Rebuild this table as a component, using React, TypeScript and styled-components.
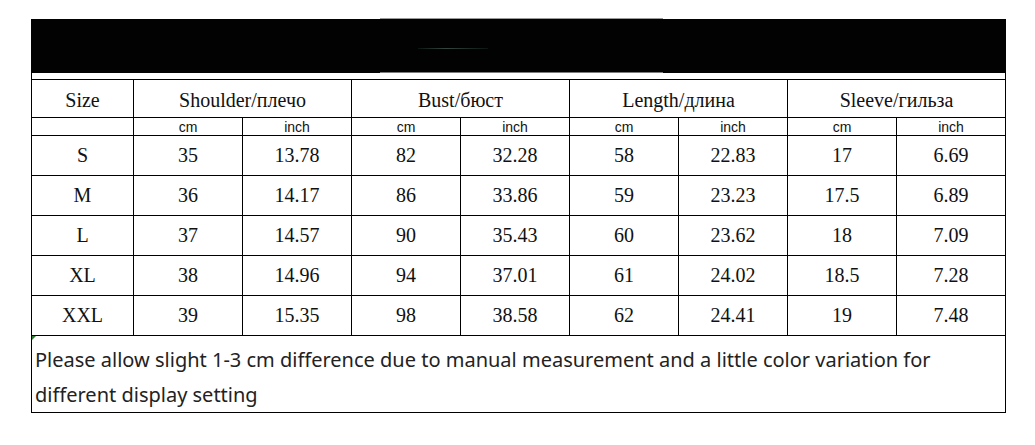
import styled, { createGlobalStyle } from 'styled-components';
import { Fragment } from 'react';

interface ISizeRow {
	size: string;
	values: string[];
}

const groups = ['Shoulder/плечо', 'Bust/бюст', 'Length/длина', 'Sleeve/гильза'];

const rows: ISizeRow[] = [
	{ size: 'S', values: ['35', '13.78', '82', '32.28', '58', '22.83', '17', '6.69'] },
	{ size: 'M', values: ['36', '14.17', '86', '33.86', '59', '23.23', '17.5', '6.89'] },
	{ size: 'L', values: ['37', '14.57', '90', '35.43', '60', '23.62', '18', '7.09'] },
	{ size: 'XL', values: ['38', '14.96', '94', '37.01', '61', '24.02', '18.5', '7.28'] },
	{ size: 'XXL', values: ['39', '15.35', '98', '38.58', '62', '24.41', '19', '7.48'] },
];

function App() {
	return (
		<>
			<GlobalStyle />
			<Page>
				<Sheet>
					<Banner>
						<Smear>
							<Streak />
						</Smear>
					</Banner>
					<Gap />
					<Grid>
						<HeadCell>Size</HeadCell>
						{groups.map((g) => (
							<HeadCell key={g} $span={2}>
								{g}
							</HeadCell>
						))}

						<UnitCell />
						{groups.map((g) => (
							<Fragment key={g}>
								<UnitCell>cm</UnitCell>
								<UnitCell>inch</UnitCell>
							</Fragment>
						))}

						{rows.map((row) => (
							<Fragment key={row.size}>
								<DataCell>{row.size}</DataCell>
								{row.values.map((v, i) => (
									<DataCell key={i}>{v}</DataCell>
								))}
							</Fragment>
						))}

						<Note>
							Please allow slight 1-3 cm difference due to manual measurement and a
							little color variation for different display setting
						</Note>
					</Grid>
				</Sheet>
			</Page>
		</>
	);
}

const GlobalStyle = createGlobalStyle`
	html, body {
		margin: 0;
		padding: 0;
		background: #fff;
	}
	* {
		box-sizing: border-box;
	}
`;

const Page = styled.div`
	width: 1035px;
	height: 445px;
	padding: 19px 0 0 31px;
	background: #fff;
	overflow: hidden;
`;

const Sheet = styled.div`
	width: 975px;
	display: flex;
	flex-direction: column;
`;

const Banner = styled.div`
	height: 54px;
	background: #020202;
	display: flex;
`;

const Smear = styled.div`
	margin-left: 349px;
	width: 283px;
	border-top: 1px solid #9a9a9a;
	border-bottom: 1px solid #7c7c7c;
	margin-top: -1px;
	padding: 29px 0 0 38px;
`;

const Streak = styled.div`
	width: 70px;
	height: 1px;
	background: linear-gradient(90deg, #0b1512, #33463f 40%, #0b1512);
`;

const Gap = styled.div`
	height: 7px;
	border-left: 1px solid #000;
	border-right: 1px solid #000;
	border-bottom: 1px solid #000;
`;

const Grid = styled.div`
	display: grid;
	grid-template-columns: 102px repeat(8, 109px);
	grid-auto-rows: auto;
	border-left: 1px solid #000;
`;

const Cell = styled.div<{ $span?: number }>`
	grid-column: span ${(p) => p.$span ?? 1};
	border-right: 1px solid #000;
	border-bottom: 1px solid #000;
	display: flex;
	align-items: center;
	justify-content: center;
	color: #111;
`;

const HeadCell = styled(Cell)`
	height: 38px;
	padding-top: 3px;
	font-family: 'Liberation Serif', 'Times New Roman', serif;
	font-size: 20px;
`;

const UnitCell = styled(Cell)`
	height: 18px;
	padding-top: 1px;
	font-family: 'Liberation Sans', Arial, sans-serif;
	font-size: 14px;
	line-height: 1;
`;

const DataCell = styled(Cell)`
	height: 40px;
	font-family: 'Liberation Serif', 'Times New Roman', serif;
	font-size: 20px;
`;

const Note = styled.div`
	position: relative;
	grid-column: 1 / -1;
	height: 77px;
	border-right: 1px solid #000;
	border-bottom: 1px solid #000;
	padding: 6px 0 0 3px;
	font-family: 'Noto Sans', 'Open Sans', sans-serif;
	font-size: 20px;
	line-height: 35px;
	color: #222;

	&::before {
		content: '';
		position: absolute;
		top: 0;
		left: 0;
		border-top: 4px solid #2e7d32;
		border-right: 4px solid transparent;
	}
`;

export default App;
